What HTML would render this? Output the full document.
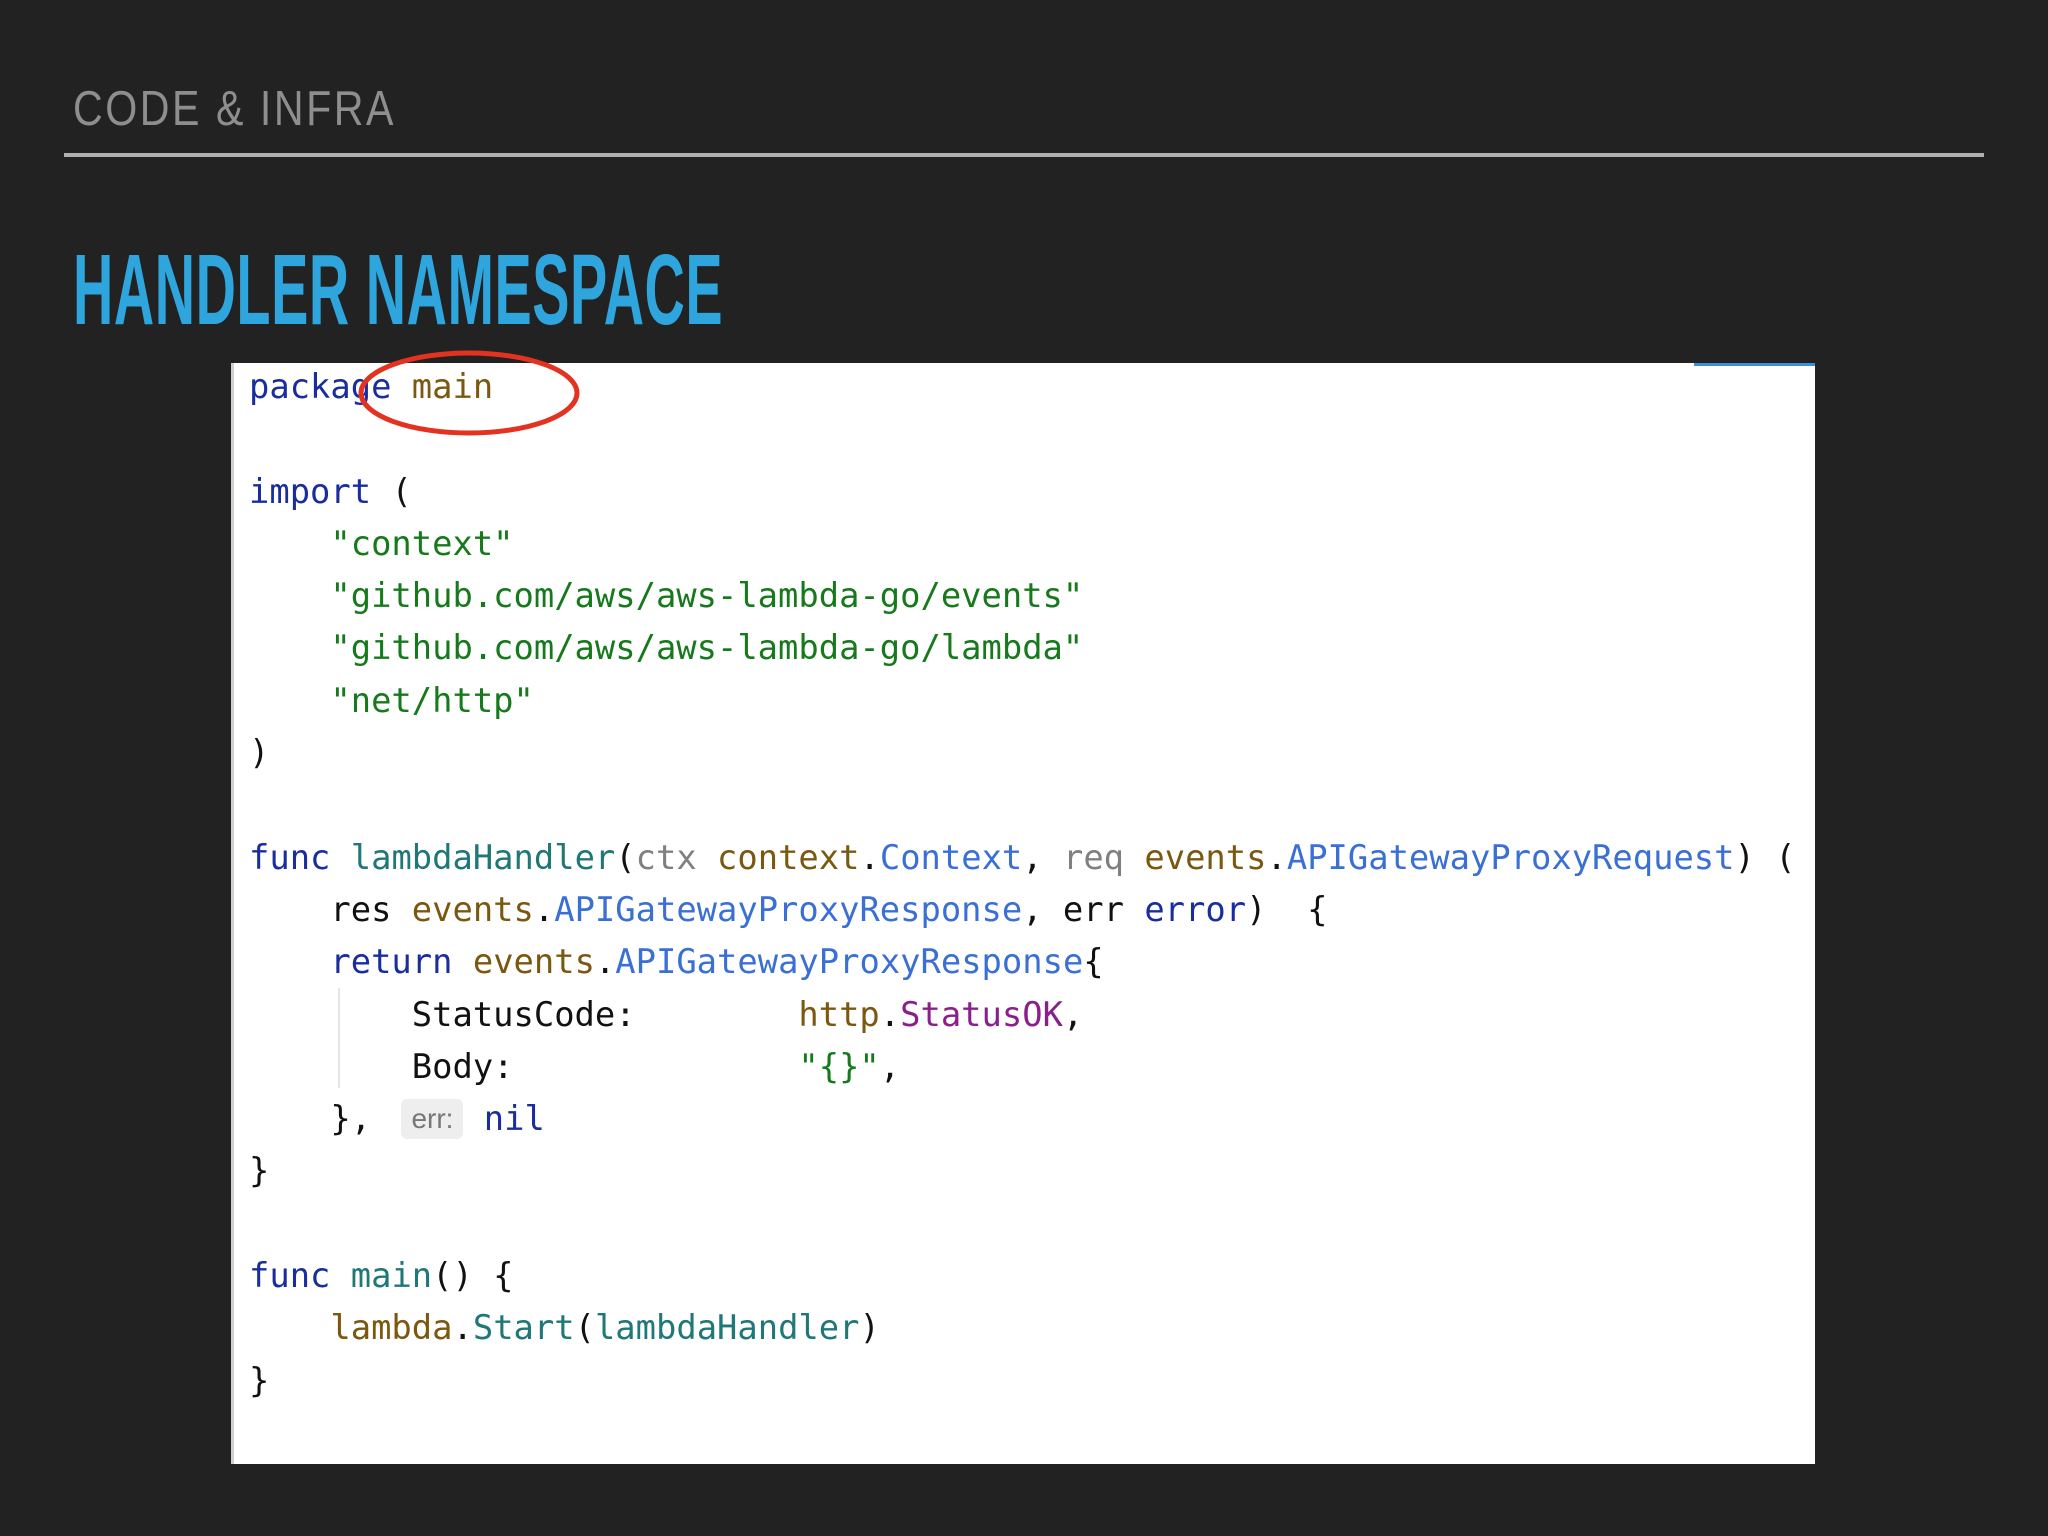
<!DOCTYPE html>
<html><head><meta charset="utf-8"><style>
html,body{margin:0;padding:0;background:#222222;width:2048px;height:1536px;overflow:hidden;position:relative;font-family:"Liberation Sans",sans-serif}
.h1{position:absolute;left:73px;top:81px;font-size:49px;color:#8e8e8e;letter-spacing:3px;transform:scaleX(0.84);transform-origin:left top}
.rule{position:absolute;left:64px;top:153px;width:1920px;height:4px;background:#b0b0b0}
.title{position:absolute;left:73px;top:233px;font-size:100px;font-weight:bold;color:#2fa5dd;transform:scaleX(0.558);transform-origin:left top;white-space:nowrap;letter-spacing:1px}
.box{position:absolute;left:231px;top:363px;width:1584px;height:1101px;background:#fff;border-left:3px solid #cfcfcf;box-sizing:border-box}
.strip{position:absolute;left:1694px;top:363px;width:121px;height:3px;background:#3a8fd8}
pre{position:absolute;left:249px;top:361px;margin:0;font-family:"DejaVu Sans Mono","Liberation Mono",monospace;font-size:33.8px;line-height:52.3px;color:#111}
.k{color:#1a2d9e}.s{color:#167a1c}.p{color:#7a5810}.t{color:#3a6fd4}.f{color:#1f7777}.g{color:#808080}.u{color:#8a1f8c}
.hint{display:inline-block;background:#eeeeee;color:#777;font-family:"Liberation Sans",sans-serif;font-size:28px;line-height:40px;padding:0 10px;border-radius:6px;vertical-align:2px;margin-left:10px}
.guide{position:absolute;left:338px;top:988px;width:2px;height:100px;background:#e6e6e6}
</style></head><body>
<div class="h1">CODE &amp; INFRA</div>
<div class="rule"></div>
<div class="title">HANDLER NAMESPACE</div>
<div class="box"></div>
<div class="strip"></div>
<div class="guide"></div>
<pre><span class="k">package</span> <span class="p">main</span>

<span class="k">import</span> (
    <span class="s">"context"</span>
    <span class="s">"github.com/aws/aws-lambda-go/events"</span>
    <span class="s">"github.com/aws/aws-lambda-go/lambda"</span>
    <span class="s">"net/http"</span>
)

<span class="k">func</span> <span class="f">lambdaHandler</span>(<span class="g">ctx</span> <span class="p">context</span>.<span class="t">Context</span>, <span class="g">req</span> <span class="p">events</span>.<span class="t">APIGatewayProxyRequest</span>) (
    res <span class="p">events</span>.<span class="t">APIGatewayProxyResponse</span>, err <span class="k">error</span>)  {
    <span class="k">return</span> <span class="p">events</span>.<span class="t">APIGatewayProxyResponse</span>{
        StatusCode:        <span class="p">http</span>.<span class="u">StatusOK</span>,
        Body:              <span class="s">"{}"</span>,
    }, <span class="hint">err:</span> <span class="k">nil</span>
}

<span class="k">func</span> <span class="f">main</span>() {
    <span class="p">lambda</span>.<span class="f">Start</span>(<span class="f">lambdaHandler</span>)
}</pre>
<svg style="position:absolute;left:0;top:0" width="2048" height="1536"><ellipse cx="469" cy="393" rx="108" ry="40" fill="none" stroke="#e3321f" stroke-width="5"/></svg>
</body></html>
